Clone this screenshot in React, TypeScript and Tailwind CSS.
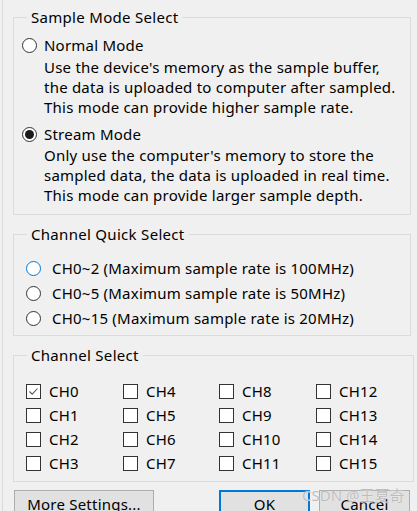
import React from "react";

const font = { fontFamily: '"Noto Sans", "Noto Sans CJK SC", sans-serif' };

function Radio({ checked, focus }: { checked?: boolean; focus?: boolean }) {
  return (
    <span
      className={`flex h-[15px] w-[15px] shrink-0 items-center justify-center rounded-full border bg-white ${
        focus ? "border-[#0078d7]" : "border-[#333333]"
      }`}
    >
      {checked && <span className="h-[9px] w-[9px] rounded-full bg-[#1a1a1a]" />}
    </span>
  );
}

function Check({ checked }: { checked?: boolean }) {
  return (
    <span className="flex h-[15px] w-[15px] shrink-0 items-center justify-center border border-[#333333] bg-white">
      {checked && (
        <svg width="11" height="11" viewBox="0 0 11 11">
          <path d="M1.5 5.5 L4.2 8.2 L9.5 2.5" fill="none" stroke="#555" strokeWidth="1.1" />
        </svg>
      )}
    </span>
  );
}

function Legend({ children, ml }: { children: React.ReactNode; ml: string }) {
  return <legend className={`${ml} px-[4px] text-[15px] leading-[20px] tracking-[0.3px]`}>{children}</legend>;
}

export default function App() {
  const channels = [0, 4, 8, 12, 1, 5, 9, 13, 2, 6, 10, 14, 3, 7, 11, 15];
  return (
    <div
      className="relative h-[511px] w-[417px] overflow-hidden bg-[#f0f0f0] text-black"
      style={font}
    >
      <div className="absolute left-[2px] top-0 h-full w-px bg-[#dadada]" />
      <div className="flex flex-col pl-[13px] pt-[7px]">
        {/* Sample Mode Select */}
        <fieldset className="w-[398px] border border-[#dcdcdc] pb-[9px] pl-[8px]">
          <Legend ml="ml-[5px]">Sample Mode Select</Legend>
          <div className="pt-[7px] text-[15px] tracking-[0.22px]">
            <div className="flex h-[22px] items-center gap-[7px]">
              <Radio />
              <span className="leading-[22px]">Normal Mode</span>
            </div>
            <div className="pl-[22px] pt-[1px] leading-[20px]">
              <div>Use the device's memory as the sample buffer,</div>
              <div>the data is uploaded to computer after sampled.</div>
              <div>This mode can provide higher sample rate.</div>
            </div>
            <div className="mt-[6px] flex h-[22px] items-center gap-[7px]">
              <Radio checked />
              <span className="leading-[22px]">Stream Mode</span>
            </div>
            <div className="pl-[22px] leading-[20px]">
              <div>Only use the computer's memory to store the</div>
              <div>sampled data, the data is uploaded in real time.</div>
              <div>This mode can provide larger sample depth.</div>
            </div>
          </div>
        </fieldset>

        {/* Channel Quick Select */}
        <fieldset className="mt-[9px] w-[398px] border border-[#dcdcdc] pb-[4px] pl-[12px]">
          <Legend ml="ml-[1px]">Channel Quick Select</Legend>
          <div className="pt-[12px] text-[15px] tracking-[0.22px]">
            {[
              "CH0~2 (Maximum sample rate is 100MHz)",
              "CH0~5 (Maximum sample rate is 50MHz)",
              "CH0~15 (Maximum sample rate is 20MHz)",
            ].map((t, i) => (
              <div key={t} className="flex h-[25px] items-center gap-[11px]">
                <Radio focus={i === 0} />
                <span>{t}</span>
              </div>
            ))}
          </div>
        </fieldset>

        {/* Channel Select */}
        <fieldset className="mt-[9px] w-[398px] border border-[#dcdcdc] pb-[6px] pl-[12px]">
          <Legend ml="ml-[1px]">Channel Select</Legend>
          <div className="grid grid-cols-[97px_96px_97px_97px] pt-[14px] text-[15px] tracking-[0.22px]">
            {channels.map((c) => (
              <div key={c} className="flex h-[24px] items-center gap-[8px]">
                <Check checked={c === 0} />
                <span>CH{c}</span>
              </div>
            ))}
          </div>
        </fieldset>

        {/* Buttons */}
        <div className="mt-[8px] flex text-[15px] tracking-[0.22px]">
          <button className="ml-[1px] h-[28px] w-[140px] border border-[#adadad] bg-[#e1e1e1] leading-[26px]">
            More Settings...
          </button>
          <button className="ml-[65px] h-[28px] w-[91px] border-2 border-[#0078d7] bg-[#e1e1e1] leading-[24px]">
            OK
          </button>
          <button className="ml-[9px] h-[28px] w-[91px] border border-[#adadad] bg-[#e1e1e1] leading-[26px]">
            Cancel
          </button>
        </div>
      </div>
      <div
        className="pointer-events-none absolute left-[302px] top-[485px] text-[15px] leading-[20px] text-[#bdbdbd]"
        style={{ textShadow: "0 0 1px #ffffff" }}
      >
        CSDN @王夏奇
      </div>
    </div>
  );
}
